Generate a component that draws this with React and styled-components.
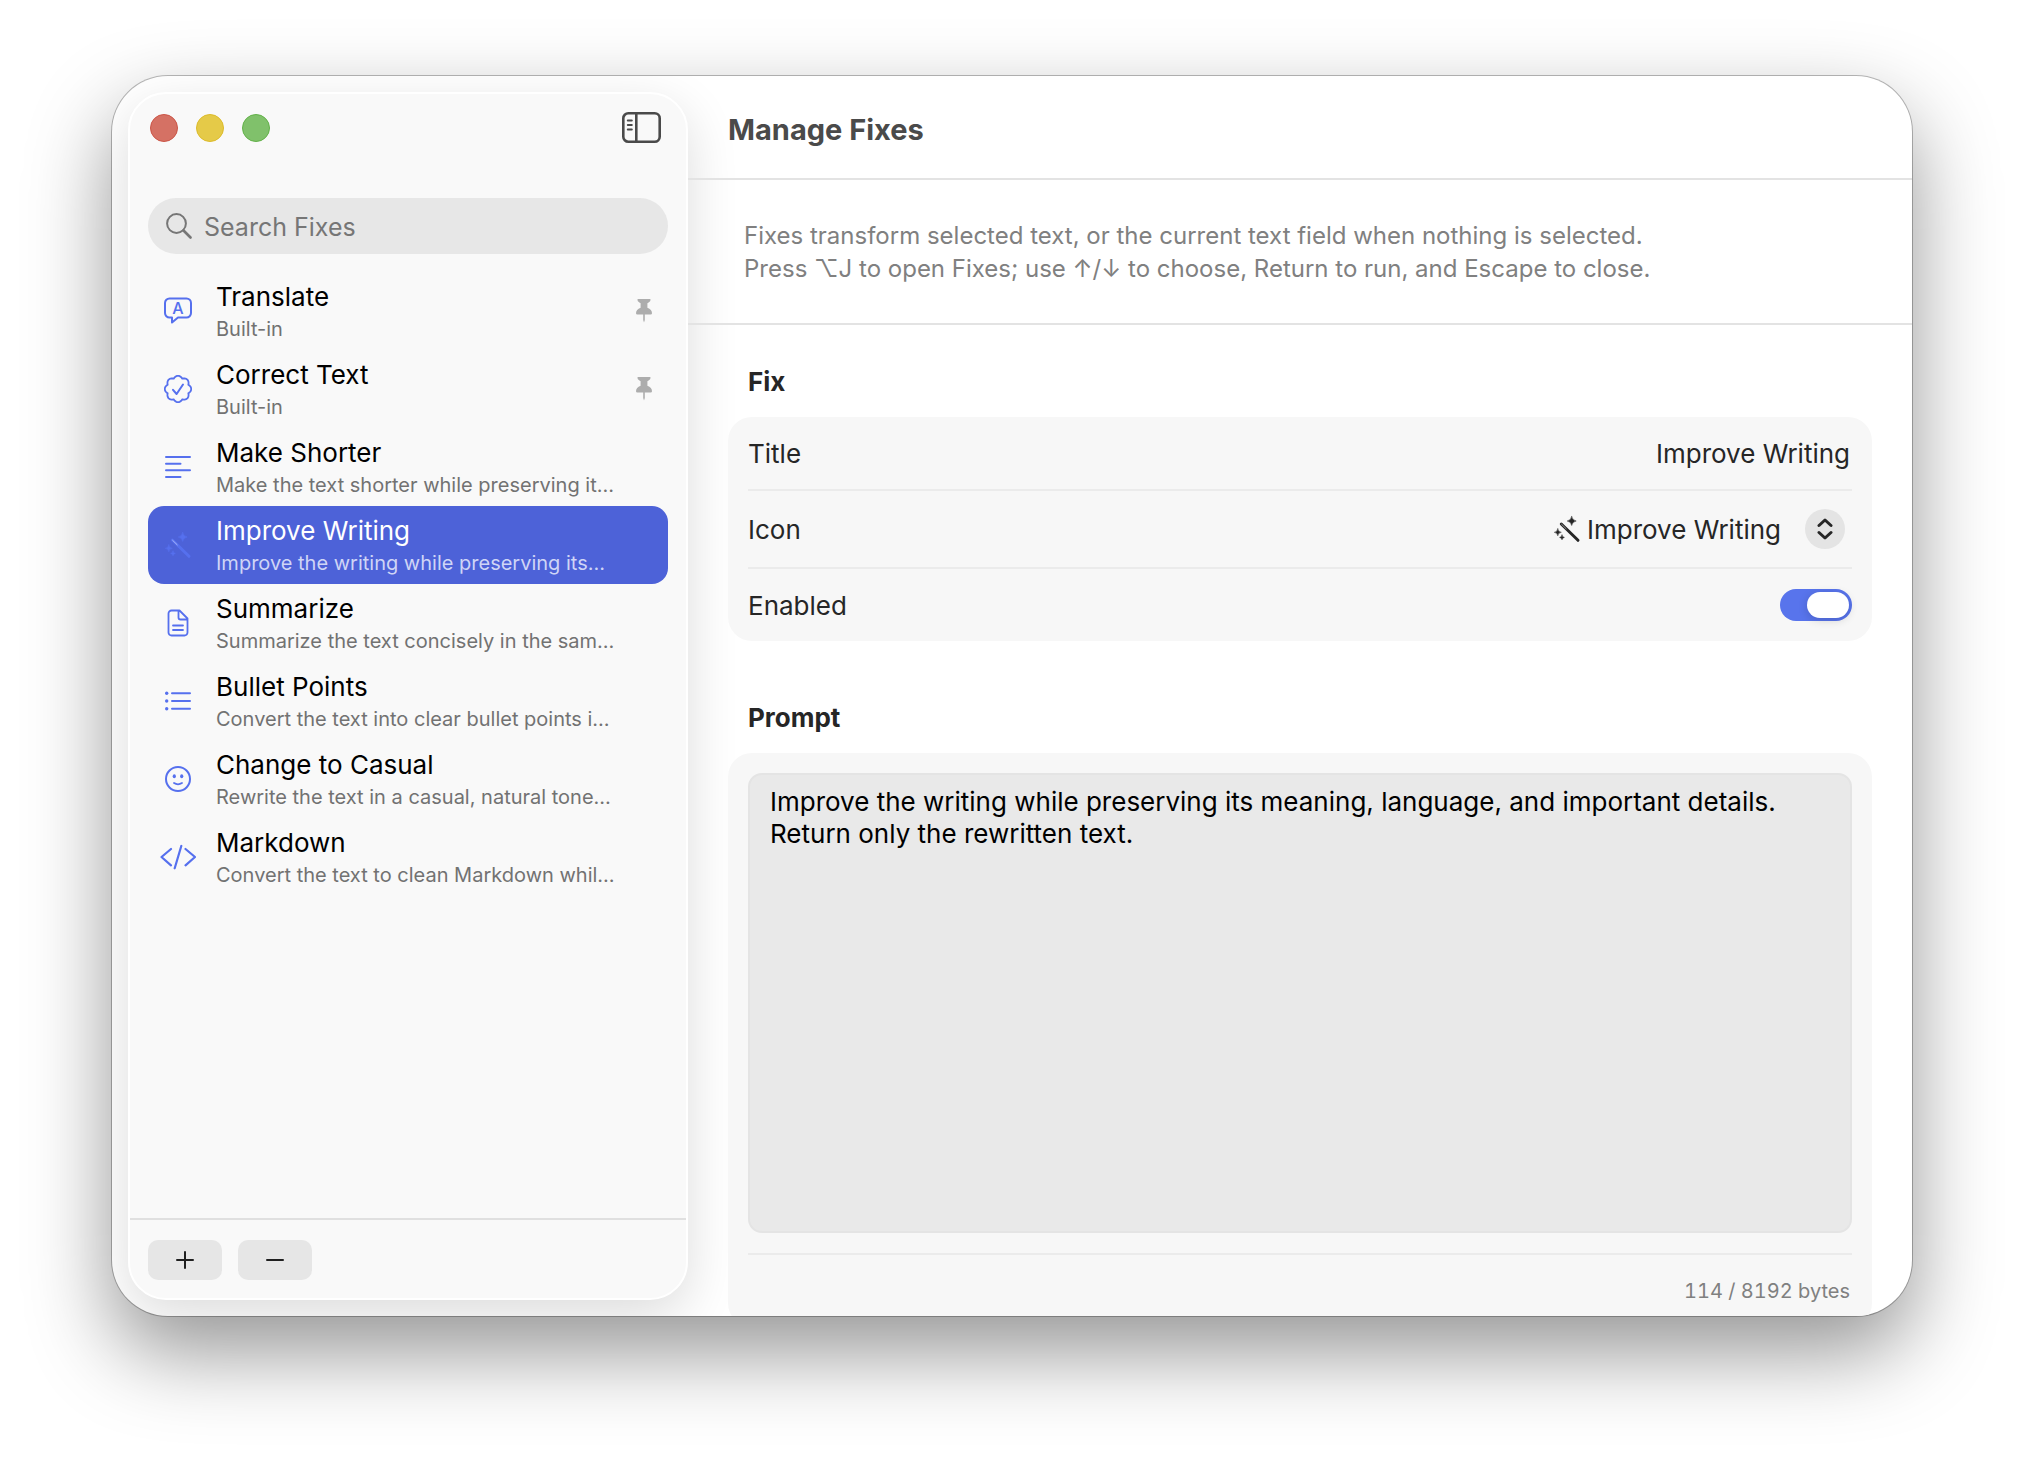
import React, { useState } from 'react';
import styled, { createGlobalStyle } from 'styled-components';

const GlobalStyle = createGlobalStyle`
  * {
    box-sizing: border-box;
  }

  body {
    margin: 0;
    background: #ffffff;
  }

  body, button, input, select, textarea {
    font-family: Inter, 'Liberation Sans', sans-serif;
    font-size: 26px;
  }
`;

// Window frame
const Desktop = styled.div`
  display: flex;
  height: 100vh;
  padding: 76px 112px 148px;
`;

const Window = styled.div`
  flex: 1;
  display: flex;
  min-width: 0;
  overflow: hidden;
  border-radius: 56px;
  background: #ffffff;
  box-shadow:
    0 0 0 1px rgba(0, 0, 0, 0.26),
    0 36px 84px rgba(0, 0, 0, 0.42);
`;

// Sidebar
const Sidebar = styled.aside`
  flex: 0 0 560px;
  display: flex;
  flex-direction: column;
  margin: 16px 0 16px 16px;
  border: 2px solid #ffffff;
  border-radius: 38px;
  background: #f9f9f9;
  box-shadow: 0 16px 52px rgba(0, 0, 0, 0.14);
`;

const SidebarTop = styled.div`
  display: flex;
  align-items: center;
  justify-content: space-between;
  padding: 18px 25px 0 20px;
`;

const TrafficLights = styled.div`
  display: flex;
  gap: 18px;
`;

const TrafficLight = styled.button`
  width: 28px;
  height: 28px;
  padding: 0;
  border: 1px solid ${({ $edge }) => $edge};
  border-radius: 50%;
  background: ${({ $fill }) => $fill};
`;

const IconButton = styled.button`
  display: flex;
  padding: 0;
  border: none;
  background: none;
  color: #4a4a4a;
`;

const SearchBox = styled.label`
  display: flex;
  align-items: center;
  gap: 12px;
  height: 56px;
  margin: 55px 18px 18px;
  padding: 0 18px;
  border-radius: 28px;
  background: #e7e7e7;
  color: #767676;
`;

const SearchInput = styled.input`
  flex: 1;
  min-width: 0;
  padding: 2px 0 0;
  border: none;
  outline: none;
  background: none;
  color: #1f1f1f;
  font-size: 25px;

  &::placeholder {
    color: #767676;
    opacity: 1;
  }
`;

const FixList = styled.ul`
  flex: 1;
  min-height: 0;
  margin: 0;
  padding: 0 18px;
  overflow: hidden;
  list-style: none;
`;

const FixRow = styled.button`
  display: flex;
  align-items: center;
  gap: 20px;
  width: 100%;
  height: 78px;
  padding: 0 16px 0 12px;
  border: none;
  border-radius: 16px;
  background: ${({ $selected }) => ($selected ? '#4d62d8' : 'transparent')};
  color: ${({ $selected }) => ($selected ? '#ffffff' : '#000000')};
  text-align: left;
`;

const FixIcon = styled.span`
  flex: 0 0 36px;
  display: flex;
  justify-content: center;
  color: #5670ee;
`;

const FixText = styled.span`
  flex: 1;
  min-width: 0;
  display: flex;
  flex-direction: column;
  padding-top: 4px;
`;

const FixName = styled.span`
  line-height: 32px;
`;

const FixDetail = styled.span`
  font-size: 20px;
  line-height: 32px;
  white-space: nowrap;
  color: ${({ $selected }) => ($selected ? '#cfd5f6' : '#727272')};
`;

const SidebarFooter = styled.div`
  display: flex;
  gap: 16px;
  padding: 20px 18px 18px;
  border-top: 2px solid #e0e0e0;
`;

const FooterButton = styled.button`
  display: flex;
  align-items: center;
  justify-content: center;
  width: 74px;
  height: 40px;
  padding: 0;
  border: none;
  border-radius: 10px;
  background: #e6e6e6;
  color: #1f1f1f;
`;

// Detail pane
const Detail = styled.main`
  flex: 1;
  min-width: 0;
  display: flex;
  flex-direction: column;
`;

const DetailHeader = styled.header`
  flex: none;
  display: flex;
  align-items: center;
  height: 104px;
  padding: 4px 40px 0;
  border-bottom: 2px solid #e3e3e3;
`;

const DetailTitle = styled.h1`
  margin: 0;
  font-size: 29px;
  font-weight: 700;
  color: #4a4a4a;
`;

const Intro = styled.p`
  flex: none;
  margin: 0;
  padding: 39px 56px 38px;
  border-bottom: 2px solid #e3e3e3;
  font-size: 24px;
  line-height: 33px;
  color: #808080;
`;

const Form = styled.form`
  flex: 1;
  min-height: 0;
  overflow: hidden;
  padding: 39px 40px 0;
`;

const SectionTitle = styled.h2`
  display: block;
  margin: 0;
  padding: 0 20px;
  font-size: 26px;
  font-weight: 700;
  line-height: 36px;
  color: #262626;
`;

const Card = styled.section`
  margin: 17px 0 59px;
  padding: 0 20px;
  border-radius: 24px;
  background: #f7f7f7;
`;

const Field = styled.div`
  display: flex;
  align-items: center;
  justify-content: space-between;
  height: ${({ $height }) => $height}px;
  color: #262626;

  & + & {
    border-top: 2px solid #ebebeb;
  }
`;

const TitleInput = styled.input`
  flex: 1;
  min-width: 0;
  padding: 0 2px;
  border: none;
  outline: none;
  background: none;
  color: #262626;
  text-align: right;
`;

const IconPicker = styled.div`
  display: flex;
  align-items: center;
  padding-right: 7px;
`;

const IconSelect = styled.select`
  appearance: none;
  field-sizing: content;
  margin: 0 24px 0 6px;
  padding: 0;
  border: none;
  outline: none;
  background: none;
  color: #262626;
`;

const PickerBadge = styled.span`
  display: flex;
  align-items: center;
  justify-content: center;
  width: 40px;
  height: 40px;
  border-radius: 50%;
  background: #e4e4e4;
`;

const Toggle = styled.input`
  appearance: none;
  display: flex;
  align-items: center;
  width: 72px;
  height: 32px;
  margin: 0;
  padding: 0 3px;
  border-radius: 16px;
  background: #c8c8c8;

  &::before {
    content: '';
    width: 42px;
    height: 26px;
    border-radius: 13px;
    background: #ffffff;
    box-shadow: 0 2px 10px rgba(0, 0, 0, 0.16);
  }

  &:checked {
    justify-content: flex-end;
    background: #5874ec;
  }
`;

const PromptCard = styled(Card)`
  padding: 20px 20px 0;
`;

const PromptInput = styled.textarea`
  display: block;
  width: 100%;
  height: 460px;
  padding: 11px 20px;
  border: 2px solid #e4e4e4;
  border-radius: 14px;
  outline: none;
  background: #e9e9e9;
  color: #000000;
  line-height: 32px;
  resize: none;
`;

const ByteCount = styled.div`
  margin-top: 20px;
  padding: 20px 2px;
  border-top: 2px solid #ebebeb;
  font-size: 20px;
  font-variant-numeric: tabular-nums;
  line-height: 32px;
  color: #808080;
  text-align: right;
`;

// Icons
const Glyph = ({ width = 28, children }) => (
  <svg
    width={width}
    height="28"
    viewBox={`0 0 ${width} 28`}
    fill="none"
    stroke="currentColor"
    strokeWidth="2"
    strokeLinecap="round"
    strokeLinejoin="round"
    aria-hidden="true"
  >
    {children}
  </svg>
);

const TranslateIcon = () => (
  <Glyph>
    <path d="M5.5 1.5h17a4.5 4.5 0 0 1 4.5 4.5v10a4.5 4.5 0 0 1-4.5 4.5H14L8 25.5V20.5H5.5A4.5 4.5 0 0 1 1 16V6a4.5 4.5 0 0 1 4.5-4.5Z" />
    <text
      x="14"
      y="17"
      textAnchor="middle"
      fontFamily="Inter, sans-serif"
      fontSize="16"
      fontWeight="500"
      fill="currentColor"
      stroke="none"
    >
      A
    </text>
  </Glyph>
);

// Eight-lobed seal outline
const sealPoints = Array.from({ length: 96 }, (_, i) => {
  const angle = (i / 96) * Math.PI * 2;
  const radius = 11.2 + 2 * Math.abs(Math.cos(angle * 4));
  return `${(14 + radius * Math.sin(angle)).toFixed(2)},${(14 - radius * Math.cos(angle)).toFixed(2)}`;
}).join(' ');

const SealIcon = () => (
  <Glyph>
    <polygon points={sealPoints} strokeWidth="1.8" />
    <path d="M9 14.8 12.6 19 19 9.5" />
  </Glyph>
);

const LinesIcon = () => (
  <Glyph>
    <path d="M2 4h24M2 10.7h14.5M2 17.3h24M2 24h14.5" />
  </Glyph>
);

const WandIcon = () => (
  <Glyph>
    <path d="M8.3 9 25 25.3" strokeWidth="3" />
    <path d="M8.6 9.3 13.2 13.8" strokeWidth="1" stroke="#ffffff" strokeOpacity="0.5" />
    <path
      d="M18.7 1.5q.6 3.9 4.5 4.5-3.9.6-4.5 4.5-.6-3.9-4.5-4.5 3.9-.6 4.5-4.5ZM4.8 13.8q.4 3.1 3.5 3.5-3.1.4-3.5 3.5-.4-3.1-3.5-3.5 3.1-.4 3.5-3.5ZM9 20q.3 2.1 2.4 2.4Q9.300 22.700 9 24.800 8.700 22.700 6.600 22.400 8.700 22.100 9 20Z"
      fill="currentColor"
      strokeWidth="0.5"
    />
  </Glyph>
);

const DocumentIcon = () => (
  <Glyph>
    <path
      d="M15.5 1.5H7.5a3 3 0 0 0-3 3v19a3 3 0 0 0 3 3h13a3 3 0 0 0 3-3V9.5ZM14.5 2v6.5a2 2 0 0 0 2 2H23M9 16.5h10M9 21h10"
      strokeWidth="1.8"
    />
  </Glyph>
);

const BulletsIcon = () => (
  <Glyph>
    <path d="M8 6.3h18M8 14h18M8 21.7h18" />
    <g fill="currentColor" stroke="none">
      <circle cx="2.7" cy="6.3" r="1.7" />
      <circle cx="2.7" cy="14" r="1.7" />
      <circle cx="2.7" cy="21.7" r="1.7" />
    </g>
  </Glyph>
);

const SmileIcon = () => (
  <Glyph>
    <circle cx="14" cy="14" r="12" />
    <g fill="currentColor" stroke="none">
      <ellipse cx="10.3" cy="11.2" rx="1.6" ry="2" />
      <ellipse cx="17.7" cy="11.2" rx="1.6" ry="2" />
    </g>
    <path d="M10 18q4 2.6 8 0" strokeWidth="1.8" />
  </Glyph>
);

const CodeIcon = () => (
  <Glyph width={36}>
    <path d="M11 6 1.5 14l9.5 8.3M21.3 3 14.7 25.3M25.5 6l9.5 8-9.5 8.3" strokeWidth="2.2" />
  </Glyph>
);

const PinIcon = () => (
  <svg width="16" height="24" viewBox="0 0 16 24" fill="#adadad" aria-hidden="true">
    <path d="M2.2 0h11.6q.8 0 .8.8 0 1.6-2 2.6l-1.2.8v4.6q4.6 2 4.6 5.4 0 1.3-1.4 1.3H1.4Q0 15.5 0 14.2 0 10.8 4.6 8.8V4.2l-1.2-.8q-2-1-2-2.6 0-.8.8-.8ZM7.2 15.5h1.6v5.5L8 23.5 7.2 21Z" />
  </svg>
);

const SidebarIcon = () => (
  <svg width="39" height="31" viewBox="0 0 39 31" fill="none" stroke="currentColor" strokeWidth="2.6" aria-hidden="true">
    <rect x="1.3" y="1.3" width="36.4" height="28.4" rx="5" />
    <path d="M14.3 1.5v28" />
    <path d="M5.8 8.5h4M5.8 13h4M5.8 17.5h4" strokeWidth="2" strokeLinecap="round" />
  </svg>
);

const SearchIcon = () => (
  <svg width="26" height="26" viewBox="0 0 26 26" fill="none" stroke="currentColor" strokeLinecap="round" aria-hidden="true">
    <circle cx="10.5" cy="10.5" r="9.4" strokeWidth="2" />
    <path d="m17.5 17.5 7 7" strokeWidth="2.6" />
  </svg>
);

const UpDownIcon = () => (
  <svg width="16" height="22" viewBox="0 0 16 22" fill="none" stroke="#262626" strokeWidth="3" strokeLinecap="round" strokeLinejoin="round" aria-hidden="true">
    <path d="m2 7.5 6-5.5 6 5.5M2 14.5 8 20l6-5.5" />
  </svg>
);

const fixes = [
  { name: 'Translate', detail: 'Built-in', icon: TranslateIcon, pinned: true },
  { name: 'Correct Text', detail: 'Built-in', icon: SealIcon, pinned: true },
  { name: 'Make Shorter', detail: 'Make the text shorter while preserving it…', icon: LinesIcon },
  { name: 'Improve Writing', detail: 'Improve the writing while preserving its…', icon: WandIcon },
  { name: 'Summarize', detail: 'Summarize the text concisely in the sam…', icon: DocumentIcon },
  { name: 'Bullet Points', detail: 'Convert the text into clear bullet points i…', icon: BulletsIcon },
  { name: 'Change to Casual', detail: 'Rewrite the text in a casual, natural tone…', icon: SmileIcon },
  { name: 'Markdown', detail: 'Convert the text to clean Markdown whil…', icon: CodeIcon },
];

const promptText =
  'Improve the writing while preserving its meaning, language, and important details.\nReturn only the rewritten text.';

const App = () => {
  const [selected, setSelected] = useState('Improve Writing');

  return (
    <Desktop>
      <GlobalStyle />
      <Window>
        <Sidebar>
          <SidebarTop>
            <TrafficLights>
              <TrafficLight aria-label="Close" $fill="#d57164" $edge="#cb5547" />
              <TrafficLight aria-label="Minimize" $fill="#e5ca48" $edge="#dcbb2b" />
              <TrafficLight aria-label="Zoom" $fill="#80c16b" $edge="#62b149" />
            </TrafficLights>
            <IconButton aria-label="Toggle sidebar">
              <SidebarIcon />
            </IconButton>
          </SidebarTop>

          <SearchBox>
            <SearchIcon />
            <SearchInput type="text" placeholder="Search Fixes" aria-label="Search Fixes" />
          </SearchBox>

          <FixList>
            {fixes.map(({ name, detail, icon: Icon, pinned }) => (
              <li key={name}>
                <FixRow type="button" $selected={name === selected} onClick={() => setSelected(name)}>
                  <FixIcon>
                    <Icon />
                  </FixIcon>
                  <FixText>
                    <FixName>{name}</FixName>
                    <FixDetail $selected={name === selected}>{detail}</FixDetail>
                  </FixText>
                  {pinned && <PinIcon />}
                </FixRow>
              </li>
            ))}
          </FixList>

          <SidebarFooter>
            <FooterButton aria-label="Add fix">
              <svg width="18" height="18" viewBox="0 0 18 18" stroke="currentColor" strokeWidth="2" strokeLinecap="round">
                <path d="M9 1v16M1 9h16" />
              </svg>
            </FooterButton>
            <FooterButton aria-label="Remove fix">
              <svg width="18" height="18" viewBox="0 0 18 18" stroke="currentColor" strokeWidth="2" strokeLinecap="round">
                <path d="M1 9h16" />
              </svg>
            </FooterButton>
          </SidebarFooter>
        </Sidebar>

        <Detail>
          <DetailHeader>
            <DetailTitle>Manage Fixes</DetailTitle>
          </DetailHeader>
          <Intro>
            Fixes transform selected text, or the current text field when nothing is selected.
            <br />
            Press ⌥J to open Fixes; use ↑/↓ to choose, Return to run, and Escape to close.
          </Intro>

          <Form onSubmit={(e) => e.preventDefault()}>
            <SectionTitle>Fix</SectionTitle>
            <Card>
              <Field $height={72}>
                <label htmlFor="fix-title">Title</label>
                <TitleInput id="fix-title" type="text" defaultValue="Improve Writing" />
              </Field>
              <Field $height={78}>
                <label htmlFor="fix-icon">Icon</label>
                <IconPicker>
                  <WandIcon />
                  <IconSelect id="fix-icon" defaultValue="Improve Writing">
                    {fixes.map(({ name }) => (
                      <option key={name}>{name}</option>
                    ))}
                  </IconSelect>
                  <PickerBadge>
                    <UpDownIcon />
                  </PickerBadge>
                </IconPicker>
              </Field>
              <Field $height={74}>
                <label htmlFor="fix-enabled">Enabled</label>
                <Toggle id="fix-enabled" type="checkbox" role="switch" defaultChecked />
              </Field>
            </Card>

            <SectionTitle as="label" htmlFor="fix-prompt">
              Prompt
            </SectionTitle>
            <PromptCard>
              <PromptInput id="fix-prompt" defaultValue={promptText} />
              <ByteCount>114 / 8192 bytes</ByteCount>
            </PromptCard>
          </Form>
        </Detail>
      </Window>
    </Desktop>
  );
};

export default App;
